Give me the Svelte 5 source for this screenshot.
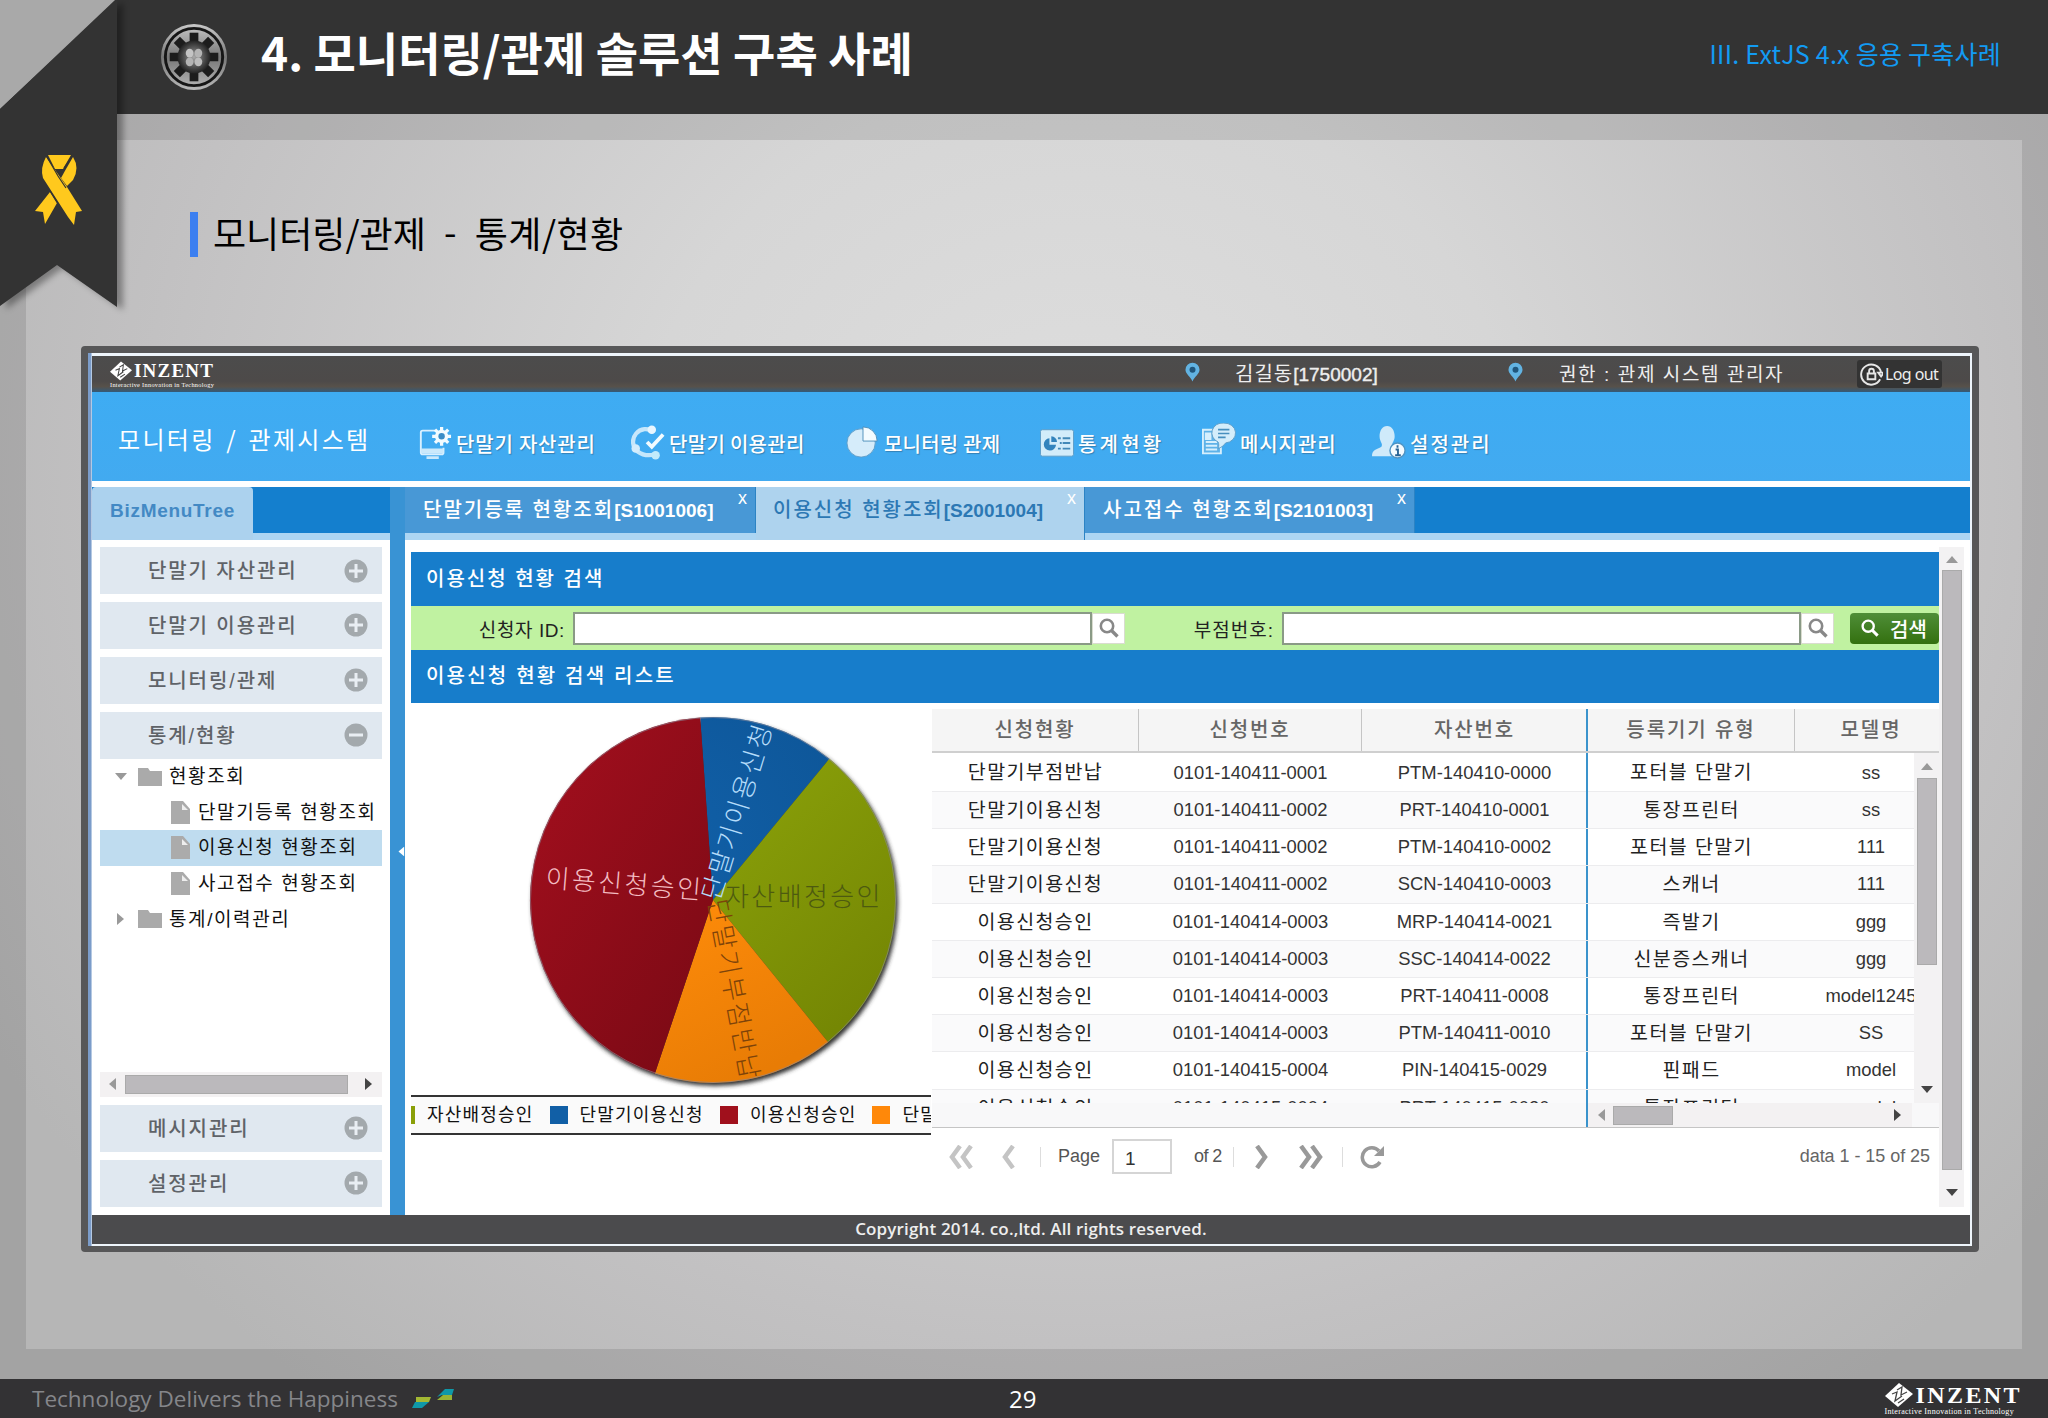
<script lang="ts">
  const navItems = [
    { icon: "device", label: "단말기 자산관리", width: 213, spacing: 0.8 },
    { icon: "cycle", label: "단말기 이용관리", width: 215, spacing: 0.3 },
    { icon: "pie", label: "모니터링 관제", width: 194, spacing: 0.2 },
    { icon: "stats", label: "통계현황", width: 162, spacing: 3.2 },
    { icon: "message", label: "메시지관리", width: 170, spacing: 0.9 },
    { icon: "user", label: "설정관리", width: 150, spacing: 2 },
  ];

  const tabs = [
    { label: "단말기등록 현황조회", code: "[S1001006]", width: 351 },
    { label: "이용신청 현황조회", code: "[S2001004]", width: 329, active: true },
    { label: "사고접수 현황조회", code: "[S2101003]", width: 330 },
  ];

  const menusTop = ["단말기 자산관리", "단말기 이용관리", "모니터링/관제"];
  const menusBottom = ["메시지관리", "설정관리"];

  const leaves = [
    { label: "단말기등록 현황조회" },
    { label: "이용신청 현황조회", selected: true },
    { label: "사고접수 현황조회" },
  ];

  const columns = ["신청현황", "신청번호", "자산번호", "등록기기 유형", "모델명"];
  const rows = [
    ["단말기부점반납", "0101-140411-0001", "PTM-140410-0000", "포터블 단말기", "ss"],
    ["단말기이용신청", "0101-140411-0002", "PRT-140410-0001", "통장프린터", "ss"],
    ["단말기이용신청", "0101-140411-0002", "PTM-140410-0002", "포터블 단말기", "111"],
    ["단말기이용신청", "0101-140411-0002", "SCN-140410-0003", "스캐너", "111"],
    ["이용신청승인", "0101-140414-0003", "MRP-140414-0021", "즉발기", "ggg"],
    ["이용신청승인", "0101-140414-0003", "SSC-140414-0022", "신분증스캐너", "ggg"],
    ["이용신청승인", "0101-140414-0003", "PRT-140411-0008", "통장프린터", "model1245"],
    ["이용신청승인", "0101-140414-0003", "PTM-140411-0010", "포터블 단말기", "SS"],
    ["이용신청승인", "0101-140415-0004", "PIN-140415-0029", "핀패드", "model"],
    ["이용신청승인", "0101-140415-0004", "PRT-140415-0030", "통장프린터", "model"],
  ];

  const R = 183;
  const slices = [
    { from: -4, to: 39.5, fill: "url(#blue)" },
    { from: 39.5, to: 141, fill: "url(#green)" },
    { from: 141, to: 198.5, fill: "url(#orange)" },
    { from: 198.5, to: 356, fill: "url(#red)" },
  ];

  const legend = [
    { label: "자산배정승인", color: "#8a9f08" },
    { label: "단말기이용신청", color: "#115fa6" },
    { label: "이용신청승인", color: "#a0101c" },
    { label: "단말기부점반납", color: "#ff8809" },
  ];

  function point(deg: number) {
    const a = (deg * Math.PI) / 180;
    return `${(R * Math.sin(a)).toFixed(1)} ${(-R * Math.cos(a)).toFixed(1)}`;
  }

  function slicePath(s: { from: number; to: number }) {
    return `M0 0L${point(s.from)}A${R} ${R} 0 0 1 ${point(s.to)}Z`;
  }
</script>

{#snippet logo(cls)}
  <div class="logo {cls}">
    <div class="logo-top">
      <svg viewBox="0 0 28 24">
        <path d="M14 0L28 11L13 24L0 13Z" fill="#fff" />
        <path d="M7 11l5-2-2 9 7-5M12 7l5-3-1 8 6-3M13 20l6-4" fill="none" stroke="#444" stroke-width="1.3" />
      </svg>
      <b>INZENT</b>
    </div>
    <small>Interactive Innovation in Technology</small>
  </div>
{/snippet}

{#snippet pin()}
  <svg class="pin" viewBox="0 0 16 20">
    <path d="M8 0a7.5 7.5 0 0 1 7.5 7.5C15.500 12 10 15 8 20C6 15 .5 12 .5 7.500A7.500 7.500 0 0 1 8 0z" fill="#62b3e2" />
    <circle cx="8" cy="7.500" r="3.200" fill="#20567c" />
  </svg>
{/snippet}

{#snippet magnifier(color)}
  <svg class="magnifier" viewBox="0 0 20 20" fill="none" stroke={color}>
    <circle cx="8" cy="8" r="6.200" stroke-width="2.600" />
    <path d="M12.500 12.500L18.500 18.500" stroke-width="3.400" />
  </svg>
{/snippet}

{#snippet toggle(minus)}
  <svg class="toggle" viewBox="0 0 24 24">
    <circle cx="12" cy="12" r="11.500" fill="#a3a9ad" />
    <path d={minus ? "M5 12H19" : "M5 12H19M12 5V19"} stroke="#e9eef3" stroke-width="3" />
  </svg>
{/snippet}

{#snippet navIcon(name)}
  <svg class="nav-icon" viewBox="0 0 36 40">
    {#if name === "device"}
      <path d="M18 8H5a2 2 0 0 0-2 2v20M3 26v5a2 2 0 0 0 2 2h20a2 2 0 0 0 2-2v-5" fill="none" stroke="#d9f0ff" stroke-width="2" />
      <path d="M3 27h24v5H3zM9 35h13v3H9z" fill="#cbe9fb" />
      <g transform="translate(25 14)" stroke="#f2fbff" stroke-width="3.400">
        <path d="M0-10V10M-10 0H10M-7-7L7 7M7-7L-7 7" />
        <circle r="7" fill="#f2fbff" stroke="none" />
        <circle r="3.400" fill="#3a8cc6" stroke="none" />
      </g>
    {:else if name === "cycle"}
      <path d="M24 9.500A12 12 0 1 0 7 30Q15 36 26 33" fill="none" stroke="#c6e7fb" stroke-width="4.500" />
      <circle cx="22" cy="7" r="4.500" fill="#e8f6ff" />
      <circle cx="5" cy="27" r="4.500" fill="#d4edfc" />
      <circle cx="26" cy="34" r="4.500" fill="#c2ebfb" />
      <path d="M17 20l5 5L34 12" fill="none" stroke="#f2fbff" stroke-width="4" />
    {:else if name === "pie"}
      <circle cx="16" cy="21" r="15" fill="#d5ecfa" stroke="#5d9cc8" />
      <path d="M18 4A15 15 0 0 1 33 19H18z" fill="#f3fbff" stroke="#4f8fbb" />
    {:else if name === "stats"}
      <rect x=".5" y="7" width="35" height="28" rx="2" fill="#d2ecfa" stroke="#5b9cc8" />
      <path d="M10 16a6.500 6.500 0 1 0 7 7h-7z" fill="#3283bd" />
      <path d="M12 14a6 6 0 0 1 6 6h-6z" fill="#3283bd" />
      <path d="M19 16h3M24 16h8M21 21h2M24 21h8M19 27h3M24 27h8" stroke="#4389b8" stroke-width="2" />
    {:else if name === "message"}
      <path d="M12 7H1v25h19V25" fill="#5eb2e8" stroke="#d6effd" stroke-width="2" />
      <path d="M4 11h5v6H4zM4 20h12M4 24h12M4 28h12" fill="#d6effd" stroke="#d6effd" stroke-width="2" />
      <path d="M23 0a11.500 10.500 0 0 1 2 21c-2 3-5 5-8 6 1-3 1-5 0-7A11 10.500 0 0 1 23 0z" fill="#d4edfb" stroke="#5b9cc8" />
      <path d="M17 7h12M17 11h12M17 15h8" stroke="#478fbe" stroke-width="1.800" />
    {:else}
      <path d="M8 14c0-6 3-11 8-11s8 5 8 11c0 5-3 7-3 10 2 3 7 2 7 11H0c0-7 5-7 10-10 2-3-2-5-2-11z" fill="#cfeafa" />
      <circle cx="27" cy="29" r="8" fill="#f4fbff" stroke="#4f94c4" stroke-width="1.500" />
      <path d="M25 28h2.500v6M24.500 34h6M27 23.500v2.500" fill="none" stroke="#2a6596" stroke-width="2" />
    {/if}
  </svg>
{/snippet}

{#snippet arrow(dir, color)}
  <svg class="arrow {dir}" viewBox="0 0 12 8"><path d="M0 8L6 1L12 8z" fill={color} /></svg>
{/snippet}

{#snippet folder()}
  <svg class="folder" viewBox="0 0 24 18">
    <path d="M0 0h10l2 3h12v15H0z" fill="#aaa" />
  </svg>
{/snippet}

<div class="slide">
  <header class="slide-header">
    <svg class="disc" viewBox="-35 -35 70 70">
      <defs>
        <linearGradient id="metal" x1="0" y1="0" x2="0" y2="1">
          <stop offset="0" stop-color="#c9c9c9" />
          <stop offset=".5" stop-color="#777" />
          <stop offset="1" stop-color="#b9b9b9" />
        </linearGradient>
        <radialGradient id="core">
          <stop offset="0" stop-color="#aaa" />
          <stop offset=".45" stop-color="#666" />
          <stop offset="1" stop-color="#222" />
        </radialGradient>
      </defs>
      <circle r="34" fill="url(#metal)" />
      <circle r="29.500" fill="none" stroke="#161616" stroke-width="3" />
      {#each [0, 45, 90, 135] as deg}
        <path d="M0-25V25" stroke="#1c1c1c" stroke-width="9" transform="rotate({deg})" />
      {/each}
      <circle r="17" fill="url(#core)" />
      <ellipse cx="-4.500" cy="-4" rx="4" ry="4.500" fill="#c4c4c4" />
      <ellipse cx="4.500" cy="-4" rx="4" ry="4.500" fill="#b4b4b4" />
      <ellipse cx="-4.500" cy="5" rx="4" ry="4.500" fill="#b4b4b4" />
      <ellipse cx="4.500" cy="5" rx="4" ry="4.500" fill="#bdbdbd" />
    </svg>
    <h1>4. 모니터링/관제 솔루션 구축 사례</h1>
    <span class="chapter">III. ExtJS 4.x 응용 구축사례</span>
  </header>

  <svg class="ribbon" viewBox="0 0 135 325">
    <path d="M0 0H117L0 109z" fill="#a9a9a9" />
    <path class="ribbon-body" d="M115 0h2V307L57 265L0 306V109z" fill="#333" />
    <g fill="#ffc91d">
      <path d="M48 155h23l-8 14h-8z" />
      <path d="M46 157L67 187L82 211L76 212L74 225L68 217L43 178Q40 168 46 157z" />
      <path d="M73 157Q80 168 73 180L67 186L61 178L66 169z" />
      <path d="M50 192L57 203L45 224L43 212L35 211z" />
    </g>
    <path d="M47 157l11 19 8 12M72 156l-8 12M50 191l8 13" fill="none" stroke="#333" stroke-width="1.200" />
  </svg>

  <main>
    <h2><span>모니터링/관제</span><i>-</i><span>통계/현황</span></h2>

    <div class="frame">
      <div class="app">
        <div class="app-header">
          {@render logo("small")}
          {@render pin()}
          <span class="user">김길동<b>[1750002]</b></span>
          {@render pin()}
          <span class="role">권한 : 관제 시스템 관리자</span>
          <span class="logout">
            <svg viewBox="0 0 24 24" fill="none" stroke="#e6e6e6" stroke-width="2">
              <path d="M21 17A10.500 10.500 0 1 1 22 10M19 10h6l-3 4z" />
              <path d="M8 11h8v6H8zM9.500 11V8.500a2.500 2.500 0 0 1 5 0V11" />
            </svg>
            Log out
          </span>
        </div>

        <nav>
          <div class="system">모니터링 / 관제시스템</div>
          {#each navItems as item}
            <div class="nav-item" style:width="{item.width}px" style:letter-spacing="{item.spacing}px">
              {@render navIcon(item.icon)}
              <span>{item.label}</span>
            </div>
          {/each}
        </nav>

        <div class="body">
          <aside>
            <div class="strip"><div class="biz">BizMenuTree</div></div>
            <div class="accordion">
              {#each menusTop as menu}
                <div class="menu"><span>{menu}</span>{@render toggle(false)}</div>
              {/each}
              <div class="menu open"><span>통계/현황</span>{@render toggle(true)}</div>
              <div class="tree">
                <div class="node">{@render arrow("down", "#999")}{@render folder()}현황조회</div>
                {#each leaves as leaf}
                  <div class="node leaf" class:selected={leaf.selected}>
                    <svg class="file" viewBox="0 0 19 23">
                      <path d="M0 0h12l7 8v15H0z" fill="#ababab" />
                      <path d="M11 3v6h6z" fill="#fff" opacity=".8" />
                    </svg>{leaf.label}
                  </div>
                {/each}
                <div class="node">{@render arrow("right", "#999")}{@render folder()}통계/이력관리</div>
              </div>
              <div class="hscroll side">
                {@render arrow("left", "#999")}<div class="thumb"></div>{@render arrow("right", "#444")}
              </div>
              {#each menusBottom as menu}
                <div class="menu low"><span>{menu}</span>{@render toggle(false)}</div>
              {/each}
            </div>
          </aside>

          <div class="splitter">{@render arrow("left", "#fff")}</div>

          <section>
            <div class="strip">
              {#each tabs as tab}
                <div class="tab" class:active={tab.active} style:width="{tab.width}px">
                  <span>{tab.label}<b>{tab.code}</b></span>
                  <em>x</em>
                </div>
              {/each}
            </div>

            <div class="work">
              <div class="content">
                <div class="title">이용신청 현황 검색</div>
                <div class="form">
                  <label for="user">신청자 ID:</label>
                  <input id="user" />
                  <span class="trigger">{@render magnifier("#888")}</span>
                  <label class="second" for="branch">부점번호:</label>
                  <input id="branch" />
                  <span class="trigger">{@render magnifier("#888")}</span>
                  <button>{@render magnifier("#fff")}검색</button>
                </div>
                <div class="title list">이용신청 현황 검색 리스트</div>

                <div class="panels">
                  <div class="chart">
                    <svg class="pie" viewBox="-302 -197 520 392">
                      <defs>
                        <radialGradient id="blue" gradientUnits="userSpaceOnUse" cx="-60" cy="-60" r="260">
                          <stop offset="0" stop-color="#1160a8" /><stop offset="1" stop-color="#0d5495" />
                        </radialGradient>
                        <linearGradient id="green" x1="0" y1="0" x2=".6" y2="1">
                          <stop offset="0" stop-color="#8ca30a" /><stop offset="1" stop-color="#758704" />
                        </linearGradient>
                        <linearGradient id="orange" x1="0" y1="0" x2=".5" y2="1">
                          <stop offset="0" stop-color="#ff8c0a" /><stop offset="1" stop-color="#e87c05" />
                        </linearGradient>
                        <linearGradient id="red" x1="0" y1="0" x2=".8" y2="1">
                          <stop offset="0" stop-color="#a50f1e" /><stop offset="1" stop-color="#7c0a15" />
                        </linearGradient>
                        <filter id="soft"><feGaussianBlur stdDeviation="2" /></filter>
                      </defs>
                      <circle cx="2" cy="3" r="183" fill="#333" filter="url(#soft)" />
                      {#each slices as slice}
                        <path d={slicePath(slice)} fill={slice.fill} />
                      {/each}
                      <circle r="182.500" fill="none" stroke="#889" stroke-opacity=".6" />
                      <text fill="#f3bcc2" transform="translate(-168 -13) rotate(4.500)">이용신청승인</text>
                      <text fill="#b5dcfa" transform="translate(6 2) rotate(-73)">단말기이용신청</text>
                      <text fill="#7d430a" transform="translate(-5 1) rotate(79.500)">단말기부점반납</text>
                      <text fill="#4d5a10" transform="translate(12 6)">자산배정승인</text>
                    </svg>
                    <div class="legend">
                      {#each legend as entry}
                        <div class="entry"><i style:background={entry.color}></i>{entry.label}</div>
                      {/each}
                    </div>
                  </div>

                  <div class="grid">
                    <div class="row head">
                      {#each columns as column}<div>{column}</div>{/each}
                    </div>
                    <div class="grid-body">
                      <div class="rows">
                        {#each rows as row}
                          <div class="row">
                            {#each row as cell}<div>{cell}</div>{/each}
                          </div>
                        {/each}
                      </div>
                      <div class="vscroll inner">
                        {@render arrow("up", "#999")}<div class="thumb"></div><div class="space"></div>{@render arrow("down", "#444")}
                      </div>
                    </div>
                    <div class="grid-foot">
                      <div class="hscroll">
                        {@render arrow("left", "#999")}<div class="thumb"></div><div class="space"></div>{@render arrow("right", "#444")}
                      </div>
                    </div>
                    <div class="paging">
                      <svg class="first" viewBox="0 0 24 24"><path d="M11 1L3 12L11 23M22 1L14 12L22 23" stroke="#c4c4c4" /></svg>
                      <svg class="prev" viewBox="0 0 14 24"><path d="M12 1L4 12L12 23" stroke="#c4c4c4" /></svg>
                      <span class="sep"></span>
                      <span class="page">Page</span>
                      <span class="number">1</span>
                      <span class="of">of 2</span>
                      <span class="sep"></span>
                      <svg class="next" viewBox="0 0 14 24"><path d="M2 1L10 12L2 23" stroke="#999" /></svg>
                      <svg class="last" viewBox="0 0 24 24"><path d="M2 1L10 12L2 23M13 1L21 12L13 23" stroke="#999" /></svg>
                      <span class="sep"></span>
                      <svg class="refresh" viewBox="0 0 24 24">
                        <path d="M20 17A9.500 9.500 0 1 1 19 6" stroke="#999" />
                        <path class="solid" d="M24 1v10H14z" />
                      </svg>
                      <span class="total">data 1 - 15 of 25</span>
                    </div>
                  </div>
                </div>
              </div>
              <div class="vscroll outer">
                {@render arrow("up", "#999")}<div class="thumb"></div>{@render arrow("down", "#444")}
              </div>
            </div>
          </section>
        </div>

        <div class="copyright">Copyright 2014. co.,ltd. All rights reserved.</div>
      </div>
    </div>
  </main>

  <footer>
    <span class="motto">Technology Delivers the Happiness</span>
    <svg class="wing" viewBox="0 0 42 20">
      <path d="M4 8h15l-2 5H4z" fill="#a3b833" />
      <path d="M3 13h14l-7 6H0z" fill="#0f98a8" />
      <path d="M25 8L33 0H42L40 6H30z" fill="#0f98a8" />
      <path d="M31 6h9v5H25z" fill="#97b334" />
    </svg>
    <span class="page-no">29</span>
    {@render logo("large")}
  </footer>
</div>

<style>
  :global(body) {
    margin: 0;
    overflow: hidden;
  }
  .slide {
    position: relative;
    display: flex;
    flex-direction: column;
    width: 2048px;
    height: 1418px;
    font-family: "Liberation Sans", "Noto Sans CJK KR", sans-serif;
    background: radial-gradient(ellipse 1250px 1150px at 1080px 480px, #dedede 0%, #d6d6d6 35%, #c2c1c2 75%, #b6b6b6 100%);
  }
  svg {
    display: block;
    flex: none;
  }
  i,
  em {
    font-style: normal;
  }

  .slide-header {
    display: flex;
    align-items: center;
    height: 114px;
    background: #333;
    box-sizing: border-box;
    padding: 0 47px 0 160px;
    font-family: "Noto Sans CJK KR", sans-serif;
  }
  .disc {
    width: 68px;
    height: 68px;
  }
  h1 {
    flex: 1;
    margin: -12px 0 0 33px;
    color: #fff;
    font-size: 46px;
    line-height: 60px;
    white-space: nowrap;
  }
  .chapter {
    margin-top: -9px;
    color: #129bf3;
    font-size: 25px;
    letter-spacing: 0.25px;
  }
  .ribbon {
    position: absolute;
    left: 0;
    top: 0;
    width: 135px;
    height: 325px;
  }
  .ribbon-body {
    filter: drop-shadow(6px 3px 3px rgba(0, 0, 0, 0.35));
  }

  main {
    flex: 1;
    display: flex;
    flex-direction: column;
    border: solid rgba(0, 0, 0, 0.1);
    border-width: 26px 26px 30px;
  }
  h2 {
    display: flex;
    margin: 72px 0 89px 164px;
    padding-left: 15px;
    height: 45px;
    border-left: 8px solid #3c7ff0;
    font: 36px/40px "Noto Sans CJK KR", sans-serif;
    color: #000;
    white-space: nowrap;
  }
  h2 i {
    width: 49px;
    font-size: 36px;
    line-height: 37px;
    text-align: center;
  }
  h2 span:last-child {
    letter-spacing: 0.4px;
  }
  .frame {
    width: 1884px;
    height: 893px;
    margin-left: 55px;
    border: solid #575758;
    border-width: 7px 7px 6px;
    border-radius: 4px;
    background: linear-gradient(90deg, #7b9cc9 0 3px, #eef5fb 4px);
  }
  .app {
    display: flex;
    flex-direction: column;
    width: 1878px;
    height: 888px;
    margin: 3px 0 0 4px;
    background: #fff;
  }

  .app-header {
    display: flex;
    align-items: center;
    height: 36px;
    background: linear-gradient(#4c4c4c, #4d4a49 70%, #57514a 85%, #345b7a);
    color: #eee;
    font-size: 19px;
    white-space: nowrap;
  }
  .logo {
    display: flex;
    flex-direction: column;
    color: #fff;
    font-family: "Liberation Serif", serif;
  }
  .logo-top {
    display: flex;
    align-items: center;
  }
  .logo.small {
    width: 1093px;
    padding-left: 18px;
    box-sizing: border-box;
  }
  .small svg {
    width: 22px;
    height: 22px;
  }
  .small b {
    font-size: 19px;
    line-height: 20px;
    letter-spacing: 1.2px;
    margin-left: 2px;
  }
  .logo small {
    font-size: 6.3px;
    line-height: 6px;
    letter-spacing: 0.3px;
  }
  .pin {
    width: 15px;
    height: 20px;
    margin-top: -4px;
  }
  .user {
    width: 308px;
    box-sizing: border-box;
    margin-top: -3px;
    padding-left: 35px;
    font-size: 20px;
    letter-spacing: 1px;
  }
  .user b {
    font-size: 19px;
    letter-spacing: 0;
    font-weight: normal;
    -webkit-text-stroke: 0.4px #eee;
  }
  .role {
    width: 334px;
    box-sizing: border-box;
    margin-top: -3px;
    padding-left: 36px;
    font-size: 19px;
    letter-spacing: 1.6px;
  }
  .logout {
    display: flex;
    align-items: center;
    gap: 2px;
    width: 82px;
    height: 28px;
    padding-left: 3px;
    border-radius: 3px;
    background: #333;
    font: 16px "Noto Sans", sans-serif;
    letter-spacing: -0.6px;
  }
  .logout svg {
    width: 23px;
    height: 23px;
  }

  nav {
    display: flex;
    align-items: center;
    height: 89px;
    margin-bottom: 6px;
    padding-left: 26px;
    background: linear-gradient(#3eacf3, #42aaf0);
    color: #fff;
    white-space: nowrap;
    font-family: "Noto Sans CJK KR", sans-serif;
  }
  .system {
    width: 300px;
    margin-top: 4px;
    font-size: 24px;
    letter-spacing: 2.3px;
    word-spacing: 3px;
  }
  .nav-item {
    display: flex;
    align-items: center;
    gap: 4px;
    margin-top: 14px;
    font-size: 20px;
    font-weight: 500;
    line-height: 30px;
    text-shadow: 1px 1px 1px #3580b5;
  }
  .nav-icon {
    width: 34px;
    height: 38px;
    margin-top: -4px;
  }

  .body {
    display: flex;
    height: 728px;
  }
  aside {
    width: 298px;
  }
  .strip {
    display: flex;
    height: 46px;
    background: #147fce;
    border-bottom: 7px solid #acd5f3;
    white-space: nowrap;
  }
  .biz {
    width: 161px;
    height: 53px;
    background: #acd2ee;
    border-radius: 4px 4px 0 0;
    color: #4389c4;
    font-size: 19px;
    font-weight: bold;
    line-height: 48px;
    letter-spacing: 0.7px;
    text-align: center;
  }
  .accordion {
    display: flex;
    flex-direction: column;
    padding: 7px 8px 0;
  }
  .menu {
    display: flex;
    align-items: center;
    justify-content: space-between;
    height: 47px;
    margin-bottom: 7.9px;
    padding: 0 14px 0 48px;
    background: #e0e8f0;
    color: #5f6368;
    font-size: 20px;
    font-weight: 500;
    letter-spacing: 1.9px;
  }
  .menu span {
    margin-top: -2px;
  }
  .menu.open {
    margin-bottom: 0;
  }
  .menu.low {
    height: 47px;
    margin: 8px 0 0;
  }
  .toggle {
    width: 24px;
    height: 24px;
  }
  .tree {
    height: 313px;
    color: #111;
  }
  .node {
    display: flex;
    align-items: center;
    height: 35.7px;
    padding-left: 15px;
    font-size: 19px;
    letter-spacing: 1.6px;
    line-height: 33px;
    white-space: nowrap;
  }
  .node.leaf {
    padding-left: 71px;
  }
  .node.selected {
    background: #bfdcef;
  }
  .arrow {
    width: 12px;
    height: 8px;
  }
  .arrow.down {
    transform: rotate(180deg);
  }
  .arrow.left {
    transform: rotate(-90deg);
  }
  .arrow.right {
    transform: rotate(90deg);
  }
  .folder {
    width: 24px;
    height: 18px;
    margin: 0 7px 0 11px;
  }
  .file {
    width: 19px;
    height: 23px;
    margin-right: 8px;
  }
  .hscroll {
    display: flex;
    align-items: center;
    height: 25px;
    background: #f3f1f2;
  }
  .hscroll.side {
    justify-content: space-between;
    padding: 0 7px 0 6px;
  }
  .thumb {
    background: #bbb9bc;
    box-shadow: inset 0 0 0 1px #aaa;
  }
  .side .thumb {
    width: 223px;
    height: 19px;
    margin-right: 8px;
  }

  .splitter {
    display: flex;
    align-items: center;
    justify-content: flex-end;
    width: 15px;
    background: #3993d4;
  }
  .splitter .arrow {
    width: 10px;
    height: 7px;
    margin-right: -1px;
  }

  section {
    width: 1565px;
  }
  .tab {
    display: flex;
    justify-content: space-between;
    height: 46px;
    box-sizing: border-box;
    padding: 0 8px 0 18px;
    background: #4898d6;
    border-right: 1px solid #2c83c4;
    color: #fff;
    font-size: 20px;
    font-weight: 500;
    line-height: 47px;
    letter-spacing: 2px;
  }
  .tab.active {
    height: 53px;
    background: #aed3ee;
    color: #2c78b4;
    padding-left: 17px;
  }
  .tab b {
    font-size: 19px;
    letter-spacing: 0;
  }
  .tab em {
    color: #fff;
    font-size: 18px;
    line-height: 23px;
    letter-spacing: 0;
  }
  .work {
    display: flex;
    height: 675px;
    box-sizing: border-box;
    padding: 7px 0 0 6px;
  }
  .content {
    width: 1528px;
    margin-top: 5px;
  }
  .title {
    height: 54px;
    padding-left: 15px;
    background: #177dcb;
    color: #fff;
    font-size: 20px;
    font-weight: 500;
    line-height: 54px;
    letter-spacing: 2px;
  }
  .title.list {
    height: 53px;
    line-height: 53px;
    letter-spacing: 2.2px;
  }
  .form {
    display: flex;
    align-items: center;
    height: 44px;
    background: #c0f2a1;
    color: #222;
  }
  .form label {
    width: 154px;
    margin-right: 8px;
    font-size: 19px;
    letter-spacing: 0.6px;
    text-align: right;
    white-space: nowrap;
  }
  .form label.second {
    width: 149px;
    letter-spacing: 1px;
  }
  .form input {
    width: 519px;
    height: 33px;
    box-sizing: border-box;
    border: 2px solid #8a9a86;
    background: #fff;
    padding: 0;
  }
  .trigger {
    display: flex;
    align-items: center;
    justify-content: center;
    width: 33px;
    height: 31px;
    background: #fff;
    box-shadow: inset 0 0 0 1px #d9dccf;
  }
  .magnifier {
    width: 20px;
    height: 20px;
  }
  .form button {
    display: flex;
    align-items: center;
    gap: 11px;
    width: 89px;
    height: 31px;
    margin-left: auto;
    padding: 0 0 0 11px;
    border: 0;
    border-radius: 4px;
    background: linear-gradient(#4f8e38, #33700f);
    color: #fff;
    font: 500 20px "Noto Sans CJK KR", sans-serif;
  }
  .form button .magnifier {
    width: 18px;
    height: 18px;
  }

  .panels {
    display: flex;
  }
  .chart {
    width: 520px;
    margin-right: 1px;
    overflow: hidden;
  }
  .pie {
    width: 520px;
    height: 392px;
  }
  .pie text {
    font-size: 26px;
    font-weight: 300;
    letter-spacing: 2.4px;
  }
  .legend {
    display: flex;
    height: 36px;
    border: solid #333;
    border-width: 2px 0;
    background: #fafafa;
  }
  .entry {
    display: flex;
    flex: none;
    align-items: center;
    margin-right: 16px;
    font-size: 18px;
    letter-spacing: 1.2px;
    color: #111;
    line-height: 34px;
    white-space: nowrap;
  }
  .entry:first-child {
    margin-left: -14px;
  }
  .entry i {
    width: 18px;
    height: 18px;
    margin-right: 12px;
  }

  .grid {
    width: 1007px;
    padding-top: 6px;
  }
  .row {
    display: grid;
    grid-template-columns: 207px 223px 225px 208px 152px;
    height: 37.2px;
    box-sizing: border-box;
    border-bottom: 1px solid #ececee;
    background: #fff;
    color: #333;
    font-size: 18.4px;
    line-height: 36px;
    text-align: center;
    white-space: nowrap;
  }
  .row div:nth-child(1),
  .row:not(.head) div:nth-child(4) {
    font-size: 19.5px;
    letter-spacing: 1.4px;
    color: #222;
  }
  .row:nth-child(even) {
    background: #fafafb;
  }
  .row div:nth-child(4) {
    border-left: 2px solid #3a93cc;
    margin-left: -1px;
  }
  .row.head {
    height: 44px;
    overflow: hidden;
    background: #f5f5f5;
    border-bottom: 2px solid #cfcfcf;
  }
  .row.head div,
  .row.head div:nth-child(1) {
    border-right: 1px solid #c5c5c5;
    color: #666;
    font-size: 20px;
    font-weight: 500;
    letter-spacing: 1.9px;
    line-height: 42px;
  }
  .row.head div:nth-child(3),
  .row.head div:nth-child(5) {
    border-right: 0;
  }
  .grid-body {
    display: flex;
    height: 350px;
    overflow: hidden;
  }
  .rows {
    width: 982px;
    overflow: hidden;
  }
  .rows .row {
    width: 1015px;
  }
  .rows .row:first-child {
    height: 39px;
    line-height: 39px;
  }
  .vscroll {
    display: flex;
    flex-direction: column;
    align-items: center;
    background: #f3f2f3;
  }
  .vscroll.inner {
    width: 25px;
    padding: 9px 0;
    height: 332px;
  }
  .inner .thumb {
    width: 20px;
    height: 187px;
    margin-top: 8px;
  }
  .space {
    flex: 1;
  }
  .vscroll.outer {
    width: 25px;
    height: 642px;
    padding: 8px 0 10px;
    justify-content: space-between;
  }
  .outer .thumb {
    width: 20px;
    height: 600px;
    margin-bottom: 12px;
  }
  .grid-foot {
    height: 24px;
    padding-left: 654px;
    background: #f8f8f9;
    border-bottom: 1px solid #c5c5c5;
  }
  .grid-foot .hscroll {
    width: 309px;
    height: 24px;
    border-left: 2px solid #3a93cc;
    padding: 0 8px 0 7px;
  }
  .grid-foot .thumb {
    width: 60px;
    height: 19px;
    margin-left: 6px;
  }
  .paging {
    display: flex;
    align-items: center;
    height: 57px;
    padding: 0 9px 0 17px;
    color: #555;
    font-size: 18px;
  }
  .paging svg {
    width: 24px;
    height: 24px;
    fill: none;
    stroke-width: 4.5;
  }
  .paging .prev,
  .paging .next {
    width: 14px;
  }
  .paging .prev {
    margin: 0 25px 0 28px;
  }
  .paging .next {
    margin-left: 21px;
  }
  .paging .last {
    margin: 0 19px 0 30px;
  }
  .paging .refresh {
    margin-left: 17px;
    stroke-width: 3.5;
  }
  .solid {
    fill: #999;
  }
  .sep {
    width: 1px;
    height: 20px;
    background: #ddd;
  }
  .page {
    width: 56px;
    padding-left: 17px;
    box-sizing: border-box;
    white-space: nowrap;
  }
  .number {
    width: 60px;
    height: 35px;
    box-sizing: border-box;
    margin-left: 15px;
    padding-left: 11px;
    border: 2px solid #d5d5d5;
    background: #fff;
    line-height: 35px;
    font-size: 19px;
    color: #333;
  }
  .of {
    width: 39px;
    margin-left: 22px;
    font-size: 18px;
    letter-spacing: -0.6px;
    white-space: nowrap;
  }
  .total {
    margin-left: auto;
    color: #666;
    letter-spacing: -0.05px;
  }
  .copyright {
    height: 29px;
    background: #4b4b4d;
    color: #eee;
    font: 600 17px/28px "Open Sans", sans-serif;
    letter-spacing: 0.15px;
    text-align: center;
  }

  footer {
    display: flex;
    align-items: center;
    height: 39px;
    padding: 0 26px 0 32px;
    background: #333234;
    color: #fff;
    white-space: nowrap;
  }
  .motto {
    width: 366px;
    color: #85868a;
    font: 22.5px/36px "Open Sans", sans-serif;
  }
  .wing {
    width: 42px;
    height: 20px;
    margin-left: 14px;
  }
  .page-no {
    flex: 1;
    padding-left: 555px;
    font: 24px/36px "Open Sans", sans-serif;
  }
  .large svg {
    width: 28px;
    height: 26px;
  }
  .large b {
    font-size: 24px;
    line-height: 26px;
    letter-spacing: 2.4px;
    margin-left: 3px;
  }
  .large small {
    font-size: 8px;
    line-height: 7px;
  }
</style>
